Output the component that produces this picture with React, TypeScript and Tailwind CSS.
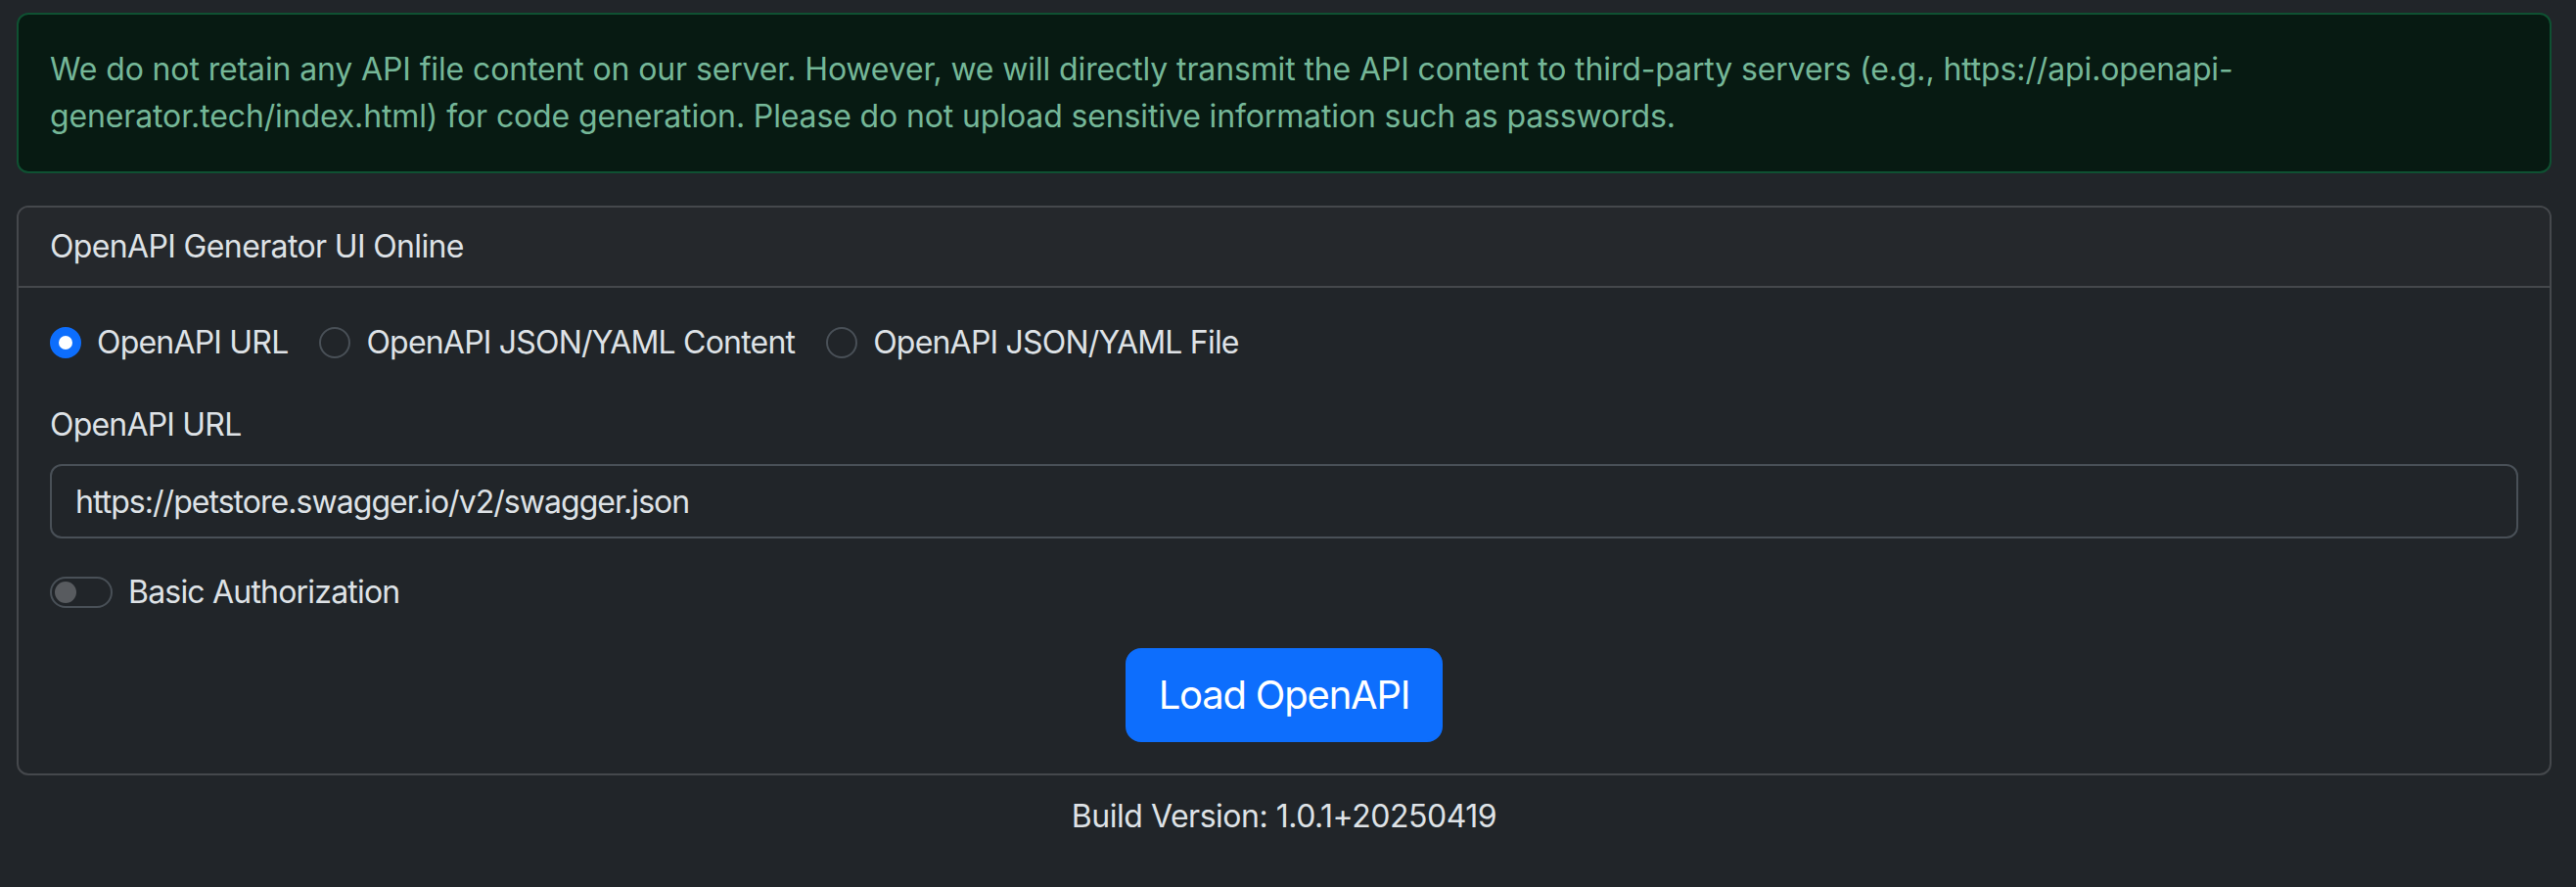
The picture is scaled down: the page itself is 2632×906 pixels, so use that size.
import { useState } from "react";

type Source = "url" | "content" | "file";

const SOURCES: { id: Source; label: string }[] = [
  { id: "url", label: "OpenAPI URL" },
  { id: "content", label: "OpenAPI JSON/YAML Content" },
  { id: "file", label: "OpenAPI JSON/YAML File" },
];

function Radio({ checked }: { checked: boolean }) {
  if (checked) {
    return (
      <span className="flex h-8 w-8 shrink-0 items-center justify-center rounded-full border-2 border-[#0d6efd] bg-[#0d6efd]">
        <span className="h-[14px] w-[14px] rounded-full bg-white" />
      </span>
    );
  }
  return <span className="h-8 w-8 shrink-0 rounded-full border-2 border-[#495057] bg-[#212529]" />;
}

export default function App() {
  const [source, setSource] = useState<Source>("url");
  const [basicAuth, setBasicAuth] = useState(false);

  return (
    <div className="min-h-screen bg-[#212529] pl-[17px] pr-[25px] pt-[13px] font-[Inter,sans-serif] text-[32px] leading-[48px] text-[#dee2e6]">
      <div className="mb-[33px] rounded-[12px] border-2 border-[#0f5132] bg-[#071a12] p-8 tracking-[-0.004em] text-[#75b798]">
        We do not retain any API file content on our server. However, we will directly transmit the API content to
        third-party servers (e.g., https://api.openapi-generator.tech/index.html) for code generation. Please do not
        upload sensitive information such as passwords.
      </div>

      <div className="rounded-[12px] border-2 border-[#45484c] tracking-[-0.025em]">
        <div className="rounded-t-[10px] border-b-2 border-[#45484c] bg-[#25282c] px-8 py-4 tracking-[-0.02em]">
          OpenAPI Generator UI Online
        </div>

        <div className="p-8">
          <div className="mb-[36px] flex h-12 items-center">
            {SOURCES.map((s) => (
              <button
                key={s.id}
                type="button"
                className="mr-8 flex items-center"
                onClick={() => setSource(s.id)}
              >
                <Radio checked={source === s.id} />
                <span className="ml-4">{s.label}</span>
              </button>
            ))}
          </div>

          <div className="mb-4">OpenAPI URL</div>
          <input
            className="block h-[76px] w-full rounded-[12px] border-2 border-[#495057] bg-[#212529] px-6 tracking-[-0.03em] text-[#dee2e6] outline-none"
            defaultValue="https://petstore.swagger.io/v2/swagger.json"
          />

          <div className="mt-[31px] flex h-12 items-center">
            <button
              type="button"
              className="flex h-8 w-16 items-center rounded-full border-2 border-[#495057] pl-[3px]"
              onClick={() => setBasicAuth(!basicAuth)}
            >
              <span className="h-[22px] w-[22px] rounded-full bg-[#585b5f]" />
            </button>
            <span className="ml-4">Basic Authorization</span>
          </div>

          <div className="mt-[33px] flex justify-center">
            <button
              type="button"
              className="rounded-2xl border-2 border-[#0d6efd] bg-[#0d6efd] px-8 py-4 text-[40px] leading-[60px] tracking-[-0.03em] text-white"
            >
              Load OpenAPI
            </button>
          </div>
        </div>
      </div>

      <div className="mt-[18px] text-center tracking-[-0.015em]">Build Version: 1.0.1+20250419</div>
    </div>
  );
}
